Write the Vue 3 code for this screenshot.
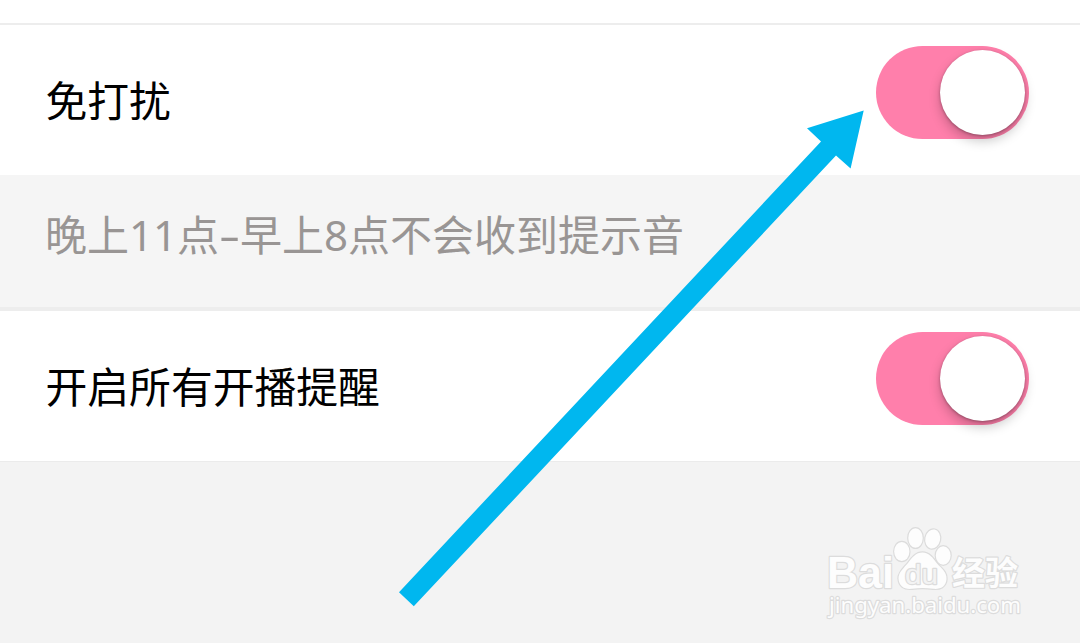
<template>
  <div class="settings-page">
    <div class="top-strip"></div>

    <div class="setting-row">
      <span class="label">免打扰</span>
      <button class="switch" :class="{ on: quiet }" @click="quiet = !quiet">
        <span class="knob"></span>
      </button>
    </div>

    <p class="hint"><span>晚上11点</span><span class="dash">-</span><span>早上8点不会收到提示音</span></p>

    <div class="setting-row">
      <span class="label">开启所有开播提醒</span>
      <button class="switch" :class="{ on: remind }" @click="remind = !remind">
        <span class="knob"></span>
      </button>
    </div>

    <div class="rest"></div>

    <!-- arrow pointing at the first switch -->
    <svg class="arrow" viewBox="0 0 1080 643">
      <path d="M863.7 110.5 L807 128.2 L821 141.5 L399 592.3 L413.8 606.3 L836 155.5 L850.6 168.6 Z" />
    </svg>

    <svg class="watermark" viewBox="0 0 230 125">
      <g class="mark">
        <text class="brand" x="17" y="77.5" textLength="67" lengthAdjust="spacingAndGlyphs">Bai</text>
        <ellipse cx="91.8" cy="41.5" rx="7.6" ry="9.6" />
        <ellipse cx="105.5" cy="28" rx="7.2" ry="9.8" />
        <ellipse cx="122.7" cy="29" rx="7.4" ry="9.6" transform="rotate(12 122.7 29)" />
        <ellipse cx="133.2" cy="45.5" rx="7.4" ry="9.2" />
        <path d="M112.5 42.5 C119 42.5 123 48 127 53.5 C131 58 137 62 136.5 69 C136 77 130 79.5 123 78.8 C116 77.8 109 77.8 102 78.8 C94 79.6 89 76 88.5 68.5 C88.5 62 94 58 98 53 C102 47.5 106 42.5 112.5 42.5 Z" />
        <text class="du" x="95" y="73.5" textLength="33" lengthAdjust="spacingAndGlyphs">du</text>
        <text class="cn" x="142" y="75" textLength="66" lengthAdjust="spacingAndGlyphs">经验</text>
        <text class="site" x="19" y="102.5" textLength="192" lengthAdjust="spacingAndGlyphs">jingyan.baidu.com</text>
      </g>
    </svg>
  </div>
</template>

<script setup>
import { ref } from 'vue';

const quiet = ref(true);
const remind = ref(true);
</script>

<style>
body {
  margin: 0;
}
</style>

<style scoped>
.settings-page {
  position: relative;
  display: flex;
  flex-direction: column;
  width: 1080px;
  height: 643px;
  overflow: hidden;
  background: #fff;
  font-family: "Noto Sans CJK SC", sans-serif;
}

.top-strip {
  box-sizing: border-box;
  height: 25px;
  border-bottom: 2px solid #ededed;
}

.setting-row {
  display: flex;
  align-items: flex-start;
  justify-content: space-between;
  box-sizing: border-box;
  height: 150px;
  padding: 21px 51px 0 45.5px;
  background: #fff;
}

.label {
  margin-top: 22px;
  font-size: 41.8px;
  line-height: 62px;
  color: #000;
}

.switch {
  display: flex;
  box-sizing: border-box;
  width: 153px;
  height: 93px;
  padding: 4px;
  border: none;
  border-radius: 47px;
  background: #ccc;
}

.switch.on {
  justify-content: flex-end;
  background: #ff7fab;
}

.knob {
  width: 85px;
  height: 85px;
  border-radius: 50%;
  background: #fff;
  box-shadow: 0 6px 12px rgba(0, 0, 0, 0.22), 0 1px 3px rgba(0, 0, 0, 0.3);
}

.hint {
  display: flex;
  box-sizing: border-box;
  height: 136px;
  margin: 0;
  padding: 29px 45px 0;
  border-bottom: 4px solid #ededed;
  background: #f5f5f5;
  font-family: "Noto Sans", "Noto Sans CJK SC", sans-serif;
  font-size: 42px;
  line-height: 62px;
  color: #999594;
  white-space: nowrap;
}

.dash {
  width: 21px;
  text-align: center;
  transform: scaleX(1.6);
}

.rest {
  flex: 1;
  box-sizing: border-box;
  border-top: 1px solid #ebebeb;
  background: #f3f3f3;
}

.arrow {
  position: absolute;
  top: 0;
  left: 0;
  width: 1080px;
  height: 643px;
  fill: #00b7ef;
  pointer-events: none;
}

.watermark {
  position: absolute;
  top: 510px;
  left: 810px;
  width: 230px;
  height: 125px;
}

.mark {
  fill: #fdfdfd;
  stroke: #dcdcdc;
  stroke-width: 2.4px;
  stroke-linejoin: round;
  paint-order: stroke;
}

.brand {
  font: bold 44px "Liberation Sans", sans-serif;
}

.du {
  font: 28px "Liberation Sans", sans-serif;
  fill: #f3f3f3;
}

.cn {
  font: bold 33px "Noto Sans CJK SC", sans-serif;
}

.site {
  font: 22px "Noto Sans", sans-serif;
}
</style>
